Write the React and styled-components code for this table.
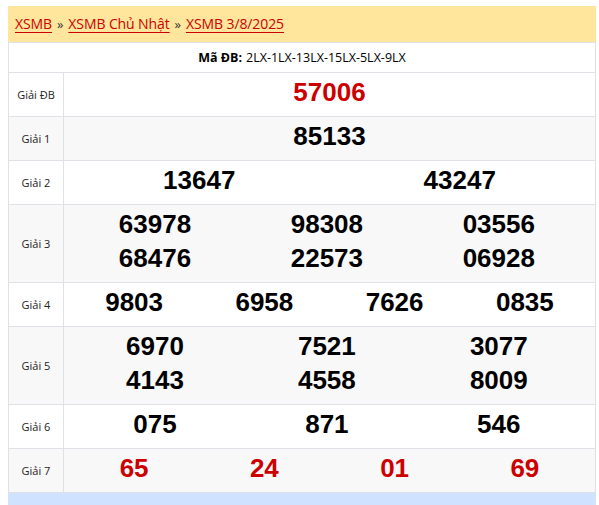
import React from 'react';
import styled, {createGlobalStyle} from 'styled-components';

const GlobalStyle = createGlobalStyle`
  *{box-sizing:border-box;}
  html,body{margin:0;padding:0;background:#fff;}
  body{font-family:"Open Sans","Noto Sans",sans-serif;color:#212529;}
`

const rows = [
  {label:'Giải ĐB', cols:1, red:true, nums:['57006']},
  {label:'Giải 1', cols:1, nums:['85133']},
  {label:'Giải 2', cols:2, nums:['13647','43247']},
  {label:'Giải 3', cols:3, nums:['63978','98308','03556','68476','22573','06928']},
  {label:'Giải 4', cols:4, nums:['9803','6958','7626','0835']},
  {label:'Giải 5', cols:3, nums:['6970','7521','3077','4143','4558','8009']},
  {label:'Giải 6', cols:3, nums:['075','871','546']},
  {label:'Giải 7', cols:4, red:true, nums:['65','24','01','69']},
];

export default function App(){
  return (
    <Page>
      <GlobalStyle/>
      <Box>
        <Breadcrumb>
          <Crumb href="#">XSMB</Crumb>
          <Sep>»</Sep>
          <Crumb href="#">XSMB Chủ Nhật</Crumb>
          <Sep>»</Sep>
          <Crumb href="#">XSMB 3/8/2025</Crumb>
        </Breadcrumb>
        <Table>
          <CodeRow>
            <b>Mã ĐB:</b> 2LX-1LX-13LX-15LX-5LX-9LX
          </CodeRow>
          {rows.map((r, i) => (
            <PrizeRow key={r.label} striped={i % 2 === 1}>
              <Label>{r.label}</Label>
              <Numbers>
                {r.nums.map((n, j) => (
                  <Num key={j} cols={r.cols} red={r.red}>{n}</Num>
                ))}
              </Numbers>
            </PrizeRow>
          ))}
        </Table>
        <Footer>Lô tô miền Bắc Chủ Nhật ngày 3/8/2025</Footer>
      </Box>
    </Page>
  );
}

const Page = styled.div`
  padding:6px 0 0 8px;
`
const Box = styled.div`
  width:588px;
`
const Breadcrumb = styled.div`
  height:37px;
  display:flex;align-items:center;
  padding:0 0 1px 7px;
  background:#ffe69c;
  border-bottom:1px solid #dee2e6;
  font-size:14px;
  letter-spacing:-0.1px;
`
const Crumb = styled.a`
  color:#c00;
  text-decoration:underline;
  text-underline-offset:3px;
  text-decoration-thickness:1px;
`
const Sep = styled.span`
  color:#333;
  font-size:13px;
  margin:0 5px;
`
const Table = styled.div`
  border-left:1px solid #dee2e6;
  border-right:1px solid #dee2e6;
`
const CodeRow = styled.div`
  height:30px;
  display:flex;align-items:center;justify-content:center;
  gap:4px;
  font-size:12.5px;color:#000;
  border-bottom:1px solid #dee2e6;
  b{font-weight:700;}
`
const PrizeRow = styled.div`
  display:grid;
  grid-template-columns:55px 1fr;
  background:${({striped}) => striped ? '#f8f8f8' : '#fff'};
  border-bottom:1px solid #dee2e6;
`
const Label = styled.div`
  display:flex;align-items:center;justify-content:center;
  border-right:1px solid #dee2e6;
  font-size:11px;color:#222;
`
const Numbers = styled.div`
  display:flex;flex-wrap:wrap;
  padding:2px 5px 7px 5px;
`
const Num = styled.span`
  flex:0 0 ${({cols}) => cols === 3 ? '33%' : (100 / cols) + '%'};
  text-align:center;
  font-family:"Liberation Sans",Arial,sans-serif;
  font-weight:700;
  font-size:26px;
  line-height:34px;
  color:${({red}) => red ? '#c00' : '#000'};
`
const Footer = styled.div`
  background:#cfe2ff;
  padding:11px 14px;
  font-size:14px;font-weight:600;color:#212529;
`
